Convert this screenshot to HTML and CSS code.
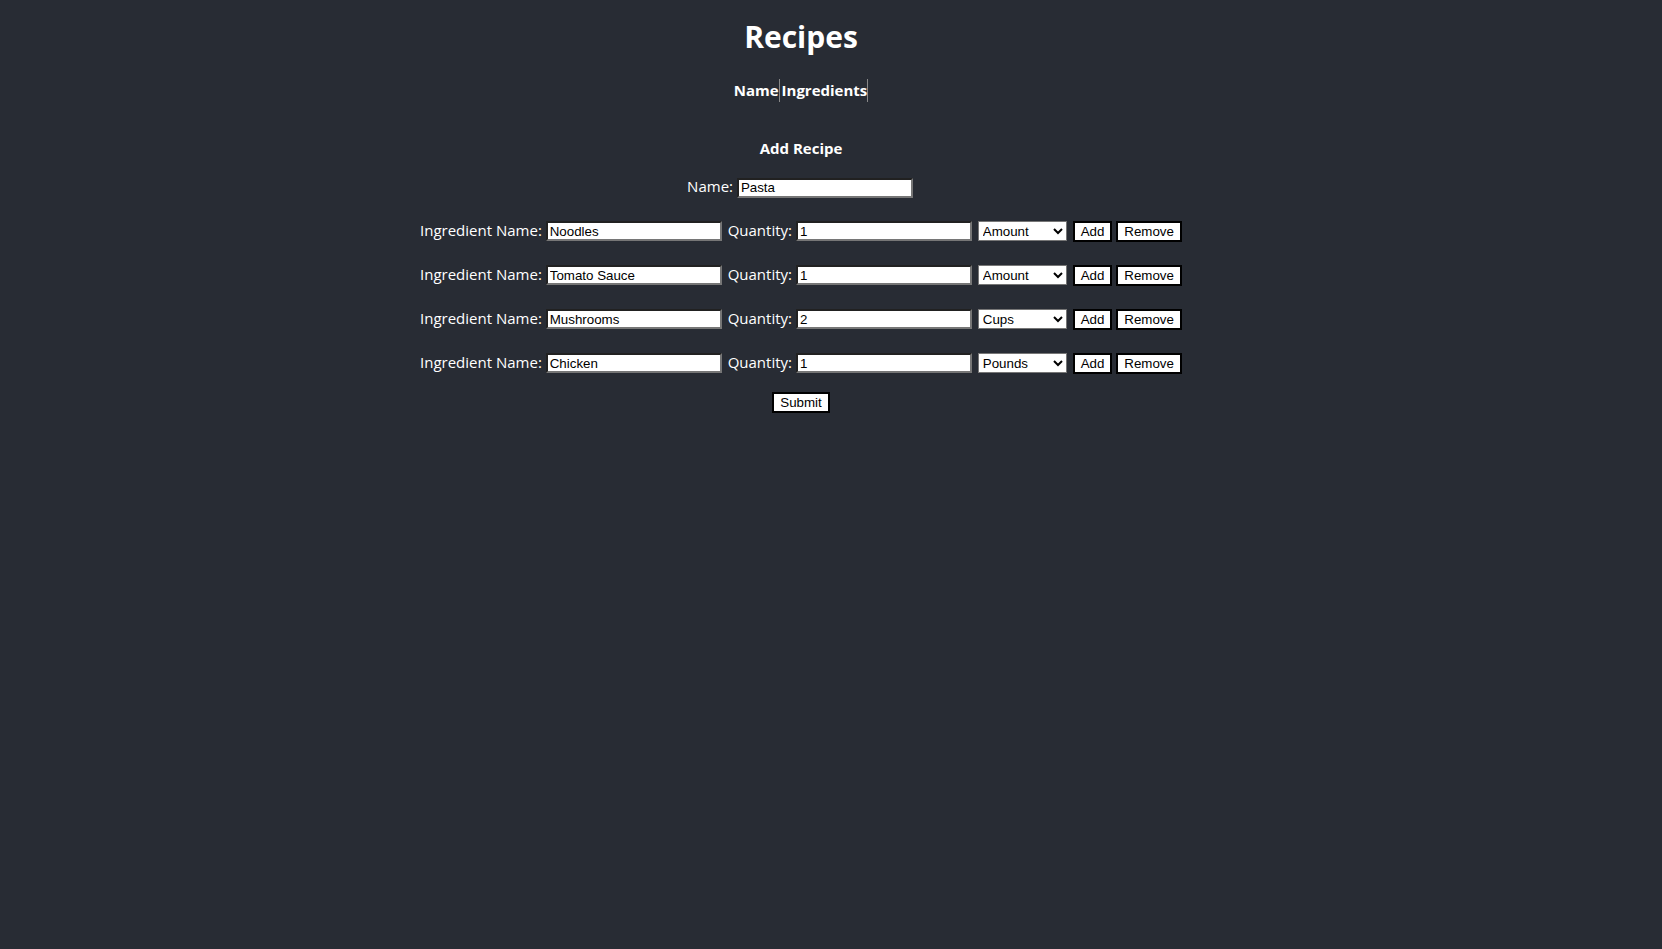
FILE: index.html
```html
<!DOCTYPE html>
<html>
<head>
<meta charset="utf-8">
<link rel="stylesheet" href="styles.css">
<title>Recipes</title>
</head>
<body>
<div class="app">
  <h1 class="title">Recipes</h1>
  <table class="recipes">
    <thead>
      <tr><th>Name</th><th>Ingredients</th></tr>
    </thead>
  </table>
  <h3 class="add-title">Add Recipe</h3>
  <form class="form">
    <div class="row">
      <label>Name: <input class="field" type="text" value="Pasta"></label>
    </div>
    <div class="row">
      <label>Ingredient Name: <input class="field" type="text" value="Noodles"></label>
      <label>Quantity: <input class="field" type="text" value="1"></label>
      <select class="unit"><option>Amount</option><option>Cups</option><option>Pounds</option></select>
      <button class="btn" type="button">Add</button>
      <button class="btn" type="button">Remove</button>
    </div>
    <div class="row">
      <label>Ingredient Name: <input class="field" type="text" value="Tomato Sauce"></label>
      <label>Quantity: <input class="field" type="text" value="1"></label>
      <select class="unit"><option>Amount</option><option>Cups</option><option>Pounds</option></select>
      <button class="btn" type="button">Add</button>
      <button class="btn" type="button">Remove</button>
    </div>
    <div class="row">
      <label>Ingredient Name: <input class="field" type="text" value="Mushrooms"></label>
      <label>Quantity: <input class="field" type="text" value="2"></label>
      <select class="unit"><option>Cups</option><option>Amount</option><option>Pounds</option></select>
      <button class="btn" type="button">Add</button>
      <button class="btn" type="button">Remove</button>
    </div>
    <div class="row">
      <label>Ingredient Name: <input class="field" type="text" value="Chicken"></label>
      <label>Quantity: <input class="field" type="text" value="1"></label>
      <select class="unit"><option>Pounds</option><option>Amount</option><option>Cups</option></select>
      <button class="btn" type="button">Add</button>
      <button class="btn" type="button">Remove</button>
    </div>
    <div class="submit-row">
      <button class="btn" type="submit">Submit</button>
    </div>
  </form>
</div>
</body>
</html>
```

FILE: styles.css
```css
html, body {
  margin: 0;
  padding: 0;
  background: #282c34;
  min-height: 100%;
}
body {
  color: #fff;
  font-family: "Open Sans", "Noto Sans", sans-serif;
}
.app {
  text-align: center;
  padding-right: 60px;
  padding-top: 1px;
}
.title {
  font-size: 30px;
  font-weight: 700;
  margin: 16px 0 20px;
  line-height: 40px;
}
.recipes {
  margin: 0 auto;
  border-collapse: separate;
  border-spacing: 2px;
}
.recipes th {
  font-size: 15px;
  font-weight: 700;
  padding: 1px 0;
  border-right: 1px solid #888;
  line-height: 21px;
}
.add-title {
  font-size: 15px;
  font-weight: 700;
  margin: 33px 0 16px;
  line-height: 22px;
}
.form {
  display: flex;
  flex-direction: column;
  align-items: center;
}
.row {
  margin-bottom: 21px;
  font-size: 15px;
  line-height: 22px;
}
.row label {
  margin-right: 2px;
}
.field {
  font-family: "Liberation Sans", Arial, sans-serif;
  font-size: 13.33px;
  color: #000;
  background: #fff;
  border: 2px inset #767676;
  padding: 1px 2px;
  width: 176px;
  box-sizing: border-box;
  height: 20px;
  vertical-align: baseline;
}
.unit {
  font-family: "Liberation Sans", Arial, sans-serif;
  font-size: 13.33px;
  color: #000;
  background: #fff;
  border: 1px solid #767676;
  width: 89px;
  height: 20px;
  margin-right: 2px;
}
.btn {
  font-family: "Liberation Sans", Arial, sans-serif;
  font-size: 13.33px;
  color: #000;
  background: #fff;
  border: 2px solid #000;
  padding: 1px 6px;
  margin: 0;
}
.submit-row {
  margin-top: -5px;
}
```
